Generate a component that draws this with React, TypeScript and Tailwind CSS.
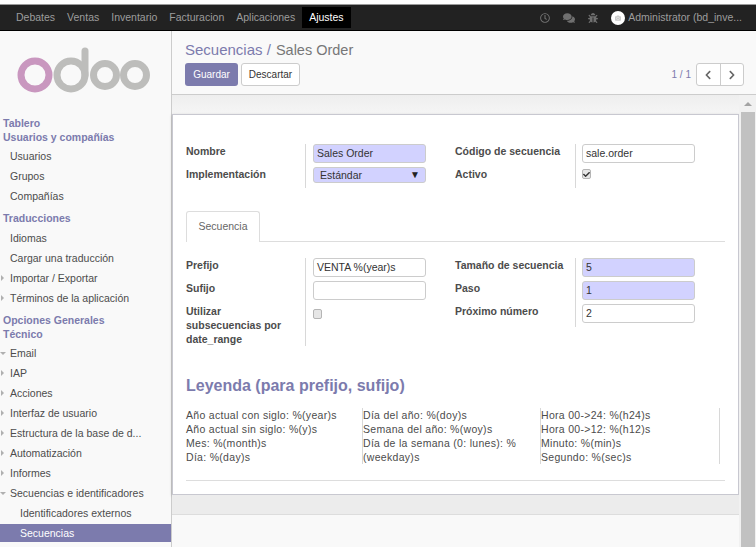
import { FaBug, FaCamera, FaCheck, FaChevronLeft, FaChevronRight, FaComments, FaRegClock } from "react-icons/fa";

const menus = ["Debates", "Ventas", "Inventario", "Facturacion", "Aplicaciones"];

const SideHeader = ({ text, className = "" }: { text: string; className?: string }) => (
  <div className={`h-[14px] pl-[3px] font-bold leading-[14px] text-[#7c7bad] ${className}`}>{text}</div>
);

const SideItem = ({ text, arrow, className = "" }: { text: string; arrow?: "right" | "down"; className?: string }) => (
  <div className={`relative mt-[2px] h-[18px] truncate pl-[10px] leading-[18px] text-[#4c4c4c] ${className}`}>
    {arrow === "right" && (
      <span className="absolute left-[1px] top-[6px] h-0 w-0 border-y-[3px] border-l-[3px] border-y-transparent border-l-[#b0b0b0]" />
    )}
    {arrow === "down" && (
      <span className="absolute left-0 top-[8px] h-0 w-0 border-x-[3px] border-t-[3px] border-x-transparent border-t-[#b0b0b0]" />
    )}
    {text}
  </div>
);

const Logo = () => (
  <svg width="136" height="48" viewBox="0 0 136 48" className="ml-[16px]">
    <circle cx="19" cy="30" r="14" fill="none" stroke="#c997bf" strokeWidth="7" />
    <circle cx="55" cy="30" r="14" fill="none" stroke="#bdbdbb" strokeWidth="7" />
    <path d="M69 30V6" stroke="#bdbdbb" strokeWidth="7" strokeLinecap="round" />
    <circle cx="89" cy="30" r="11.5" fill="none" stroke="#bdbdbb" strokeWidth="7" />
    <circle cx="119" cy="30" r="11.5" fill="none" stroke="#bdbdbb" strokeWidth="7" />
  </svg>
);

const Sidebar = () => (
  <aside className="w-[172px] shrink-0 border-r border-[#cccccc] bg-[#f9f9f9]">
    <div className="h-[85px] pt-[14px]">
      <Logo />
    </div>
    <SideHeader text="Tablero" />
    <SideHeader text="Usuarios y compañías" />
    <SideItem text="Usuarios" className="mt-[3px]" />
    <SideItem text="Grupos" />
    <SideItem text="Compañías" />
    <SideHeader text="Traducciones" className="mt-[6px]" />
    <SideItem text="Idiomas" className="mt-[4px]" />
    <SideItem text="Cargar una traducción" />
    <SideItem text="Importar / Exportar" arrow="right" />
    <SideItem text="Términos de la aplicación" arrow="right" />
    <SideHeader text="Opciones Generales" className="mt-[6px]" />
    <SideHeader text="Técnico" />
    <SideItem text="Email" arrow="down" className="mt-[3px]" />
    <SideItem text="IAP" arrow="right" />
    <SideItem text="Acciones" arrow="right" />
    <SideItem text="Interfaz de usuario" arrow="right" />
    <SideItem text="Estructura de la base de d..." arrow="right" />
    <SideItem text="Automatización" arrow="right" />
    <SideItem text="Informes" arrow="right" />
    <SideItem text="Secuencias e identificadores" arrow="down" />
    <div className="mt-[2px] h-[18px] pl-[20px] leading-[18px] text-[#4c4c4c]">Identificadores externos</div>
    <div className="mt-[2px] h-[18px] bg-[#7c7bad] pl-[20px] leading-[18px] text-white">Secuencias</div>
  </aside>
);

const Field = ({ value = "", required }: { value?: string; required?: boolean }) => (
  <div
    className={`h-[19px] w-[113px] rounded-[3px] border border-[#cccccc] pl-[3px] leading-[17px] text-[#333333] ${
      required ? "bg-[#d2d2ff]" : "bg-white"
    }`}
  >
    {value}
  </div>
);

const Check = ({ checked }: { checked?: boolean }) => (
  <div className="flex h-[10px] w-[9px] items-center justify-center rounded-[2px] border border-[#b5b5b5] bg-[#e6e6e6] text-[#333333]">
    {checked && <FaCheck size={7} />}
  </div>
);

const Label = ({ children }: { children: React.ReactNode }) => (
  <div className="font-bold leading-[14px] text-[#4c4c4c]">{children}</div>
);

const Legend = ({ lines, className = "" }: { lines: string[]; className?: string }) => (
  <div className={`border-r border-[#d8d8d8] leading-[14px] tracking-[0.3px] text-[#4c4c4c] ${className}`}>
    {lines.map((l) => (
      <div key={l}>{l}</div>
    ))}
  </div>
);

const Sheet = () => (
  <div className="h-[381px] border border-[#c8c8d0] bg-white pl-[13px] pr-[13px] pt-[29px] shadow-[0_1px_3px_rgba(0,0,0,0.2)]">
    <div className="flex h-[44px]">
      <div className="w-[120px] border-r border-[#d8d8d8]">
        <Label>Nombre</Label>
        <div className="pt-[9px]"><Label>Implementación</Label></div>
      </div>
      <div className="ml-[7px] w-[142px]">
        <Field value="Sales Order" required />
        <div className="mt-[4px] flex h-[16px] w-[113px] items-center justify-between rounded-[3px] border border-[#cccccc] bg-[#d2d2ff] pl-[6px] pr-[5px] leading-[14px] text-[#333333]">
          <span>Estándar</span>
          <span className="text-[10px] text-[#222222]">▼</span>
        </div>
      </div>
      <div className="w-[121px] border-r border-[#d8d8d8]">
        <Label>Código de secuencia</Label>
        <div className="pt-[9px]"><Label>Activo</Label></div>
      </div>
      <div className="ml-[6px]">
        <Field value="sale.order" />
        <div className="mt-[6px]"><Check checked /></div>
      </div>
    </div>

    <div className="mt-[23px] flex h-[31px] w-[539px] border-b border-[#dddddd]">
      <div className="flex h-[31px] w-[74px] items-center justify-center rounded-t-[3px] border border-b-0 border-[#dddddd] bg-white text-[#666666]">
        Secuencia
      </div>
    </div>

    <div className="mt-[16px] flex h-[88px]">
      <div className="w-[120px] border-r border-[#d8d8d8]">
        <Label>Prefijo</Label>
        <div className="pt-[9px]"><Label>Sufijo</Label></div>
        <div className="pt-[9px]">
          <Label>Utilizar<br />subsecuencias por<br />date_range</Label>
        </div>
      </div>
      <div className="ml-[7px] w-[142px]">
        <Field value="VENTA %(year)s" />
        <div className="mt-[4px]"><Field /></div>
        <div className="mt-[9px]"><Check /></div>
      </div>
      <div className="h-[69px] w-[121px] border-r border-[#d8d8d8]">
        <Label>Tamaño de secuencia</Label>
        <div className="pt-[9px]"><Label>Paso</Label></div>
        <div className="pt-[9px]"><Label>Próximo número</Label></div>
      </div>
      <div className="ml-[6px]">
        <Field value="5" required />
        <div className="mt-[4px]"><Field value="1" required /></div>
        <div className="mt-[4px]"><Field value="2" /></div>
      </div>
    </div>

    <h2 className="mt-[29px] h-[22px] text-[16px] font-bold leading-[22px] text-[#7c7bad]">Leyenda (para prefijo, sufijo)</h2>

    <div className="mt-[11px] flex h-[56px] w-[534px]">
      <Legend
        className="w-[177px]"
        lines={["Año actual con siglo: %(year)s", "Año actual sin siglo: %(y)s", "Mes: %(month)s", "Día: %(day)s"]}
      />
      <Legend
        className="w-[178px]"
        lines={["Día del año: %(doy)s", "Semana del año: %(woy)s", "Día de la semana (0: lunes): %", "(weekday)s"]}
      />
      <Legend
        className="w-[179px]"
        lines={["Hora 00->24: %(h24)s", "Hora 00->12: %(h12)s", "Minuto: %(min)s", "Segundo: %(sec)s"]}
      />
    </div>

    <div className="mt-[16px] w-[539px] border-t border-[#dddddd]" />
  </div>
);

const Scrollbar = () => (
  <div className="flex w-[17px] shrink-0 flex-col items-center bg-[#f1f1f1]">
    <div className="flex h-[17px] w-full items-center justify-center">
      <span className="h-0 w-0 border-x-[4px] border-b-[4px] border-x-transparent border-b-[#a3a3a3]" />
    </div>
    <div className="w-[14px] flex-1 bg-[#c1c1c1]" />
  </div>
);

export default function App() {
  return (
    <div className="flex h-[547px] w-[756px] flex-col overflow-hidden bg-white font-['Liberation_Sans',Arial,sans-serif] text-[10.5px]">
      <div className="h-[4px] shrink-0 bg-white" />
      <nav className="flex h-[27px] shrink-0 items-center border-y border-y-[#9a9a9a] border-b-black bg-[#222222] pl-[10px] pr-[14px] text-[#9d9d9d]">
        {menus.map((m) => (
          <span key={m} className="px-[6px]">{m}</span>
        ))}
        <span className="ml-[1px] flex h-[21px] items-center bg-black px-[7px] text-white">Ajustes</span>
        <div className="ml-auto flex items-center text-[#6f6f6f]">
          <FaRegClock size={10} className="mr-[13px]" />
          <FaComments size={12} className="mr-[13px]" />
          <FaBug size={10} className="mr-[13px]" />
          <span className="mr-[3px] flex h-[14px] w-[14px] items-center justify-center rounded-full bg-white text-[#cccccc]">
            <FaCamera size={6} />
          </span>
          <span className="text-[#9d9d9d]">Administrator (bd_inve...</span>
        </div>
      </nav>

      <div className="flex min-h-0 flex-1">
        <Sidebar />
        <main className="flex min-w-0 flex-1 flex-col">
          <div className="h-[64px] shrink-0 border-b border-[#cccccc] bg-[#f9f9f9] pl-[13px] pr-[12px] pt-[10px]">
            <div className="h-[18px] text-[15px] leading-[18px] text-[#777777]">
              <span className="text-[#7c7bad]">Secuencias /</span>
              <span className="ml-[5px] text-[14.5px]">Sales Order</span>
            </div>
            <div className="mt-[4px] flex items-center text-[10px]">
              <button className="h-[23px] w-[53px] rounded-[3px] bg-[#7c7bad] text-white">Guardar</button>
              <button className="ml-[3px] h-[23px] w-[59px] rounded-[3px] border border-[#cccccc] bg-white text-[#333333]">Descartar</button>
              <span className="ml-auto text-[#7c7bad]">1 / 1</span>
              <div className="ml-[5px] flex h-[23px] w-[48px] rounded-[3px] border border-[#cccccc] bg-white text-[#666666]">
                <span className="flex flex-1 items-center justify-center border-r border-[#cccccc]"><FaChevronLeft size={10} /></span>
                <span className="flex flex-1 items-center justify-center"><FaChevronRight size={10} /></span>
              </div>
            </div>
          </div>
          <div className="flex min-h-0 flex-1">
            <div className="min-w-0 flex-1 bg-[#f9f9f9]">
              <div className="h-[19px] bg-gradient-to-b from-[#eeeeee] to-[#f5f5f5]" />
              <Sheet />
              <div className="h-[20px] border-b border-[#dddddd] bg-[#ececec]" />
            </div>
            <Scrollbar />
          </div>
        </main>
      </div>
    </div>
  );
}
